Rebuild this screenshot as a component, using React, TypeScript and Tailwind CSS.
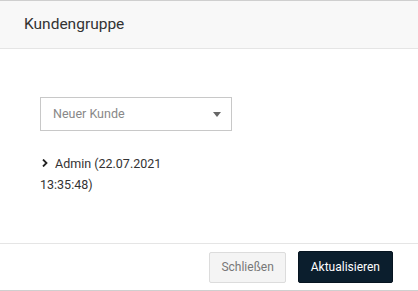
export default function App() {
  return (
    <div
      className="w-[418px] h-[291px] bg-white flex flex-col border-t border-b border-[#cfcfcf] text-[#333]"
      style={{ fontFamily: "Roboto, 'Liberation Sans', sans-serif" }}
    >
      {/* Header */}
      <div className="h-[48px] flex items-center px-6 bg-[#f8f8f8] border-b border-[#e5e5e5]">
        <h2 className="text-[15.5px] text-[#333] font-normal">Kundengruppe</h2>
      </div>

      {/* Body */}
      <div className="flex-1 px-10 pt-[48px]">
        <div className="w-[192px] h-[34px] border border-[#c8c8c8] flex items-center justify-between pl-3 pr-[10px]">
          <span className="text-[12.5px] text-[#888]">Neuer Kunde</span>
          <svg width="8" height="5" viewBox="0 0 8 5">
            <path d="M0 0h8L4 5z" fill="#666" />
          </svg>
        </div>
        <div className="mt-[22px] w-[130px] text-[12.5px] leading-[21px] text-[#333]">
          <svg width="6" height="8" viewBox="0 0 6 8" className="inline-block mr-[7px] ml-[2px] align-[1px]">
            <path d="M1 0.5l3.5 3.5L1 7.5" stroke="#222" strokeWidth="1.8" fill="none" />
          </svg>
          Admin (22.07.2021 13:35:48)
        </div>
      </div>

      {/* Footer */}
      <div className="h-[47px] border-t border-[#e5e5e5] flex items-center justify-end gap-3 pr-[25px]">
        <button className="h-[31px] px-[11px] bg-[#f4f4f4] border border-[#dcdcdc] rounded-[2px] text-[12px] text-[#777]">
          Schließen
        </button>
        <button className="h-[32px] px-[12px] bg-[#0b1e2d] border border-[#061420] rounded-[2px] text-[12px] text-white">
          Aktualisieren
        </button>
      </div>
    </div>
  );
}
